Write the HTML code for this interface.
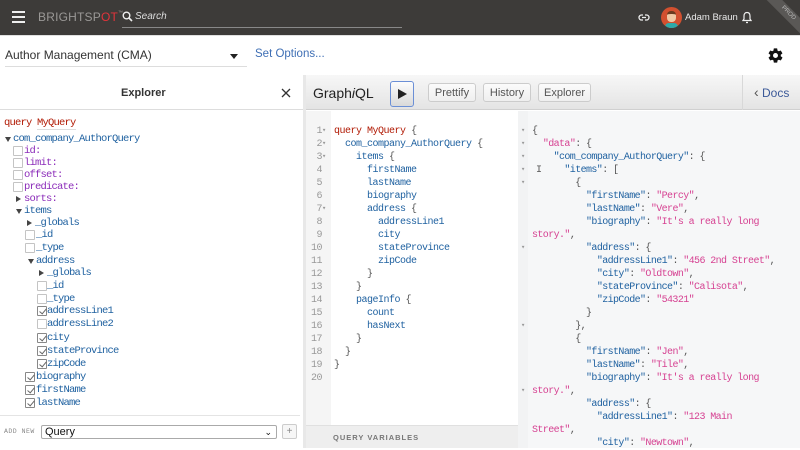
<!DOCTYPE html>
<html><head><meta charset="utf-8"><style>
*{margin:0;padding:0;box-sizing:border-box}
body{width:800px;height:448px;overflow:hidden;background:#fff;font-family:"Liberation Sans",sans-serif;position:relative}
.a{position:absolute;white-space:pre}
.mono{font-family:"Liberation Mono","DejaVu Sans Mono",monospace;font-size:10px}
.ex{letter-spacing:-0.8px;font-size:10.5px}
.ed{letter-spacing:-0.5px}
.hdr{position:absolute;left:0;top:0;width:800px;height:35px;background:#3d3b39;overflow:hidden}
.cb{position:absolute;width:10px;height:10px;border:1px solid #c4c4c4;background:#fff;border-radius:1px}
.cb.c{border-color:#888}
.cb.c:after{content:"";position:absolute;left:2.5px;top:0px;width:3px;height:6px;border:solid #666;border-width:0 1px 1px 0;transform:rotate(40deg)}
.tri{position:absolute;width:0;height:0}
.td{border-left:3px solid transparent;border-right:3px solid transparent;border-top:5px solid #444}
.tr{border-top:3px solid transparent;border-bottom:3px solid transparent;border-left:5px solid #444}
.btn{position:absolute;top:83px;height:19px;border:1px solid #ccc;border-radius:3px;background:linear-gradient(#fbfbfb,#efefef);font-size:11px;color:#555;text-align:center;line-height:18px}
.b{color:#1f61a0}.p{color:#8b2bb9}.k{color:#b11a04}.g{color:#555}.n{color:#999}
.jk{color:#1f61a0}.js{color:#d64292}
</style></head><body>
<div class="hdr">
 <div class="a" style="left:12px;top:11px;width:13px;height:2px;background:#eee;box-shadow:0 5px 0 #eee,0 10px 0 #eee"></div>
 <div class="a" style="left:38px;top:10px;font-size:12px;color:#9a9896;letter-spacing:0.2px">BRIGHTSP<span style="color:#e2333a">OT</span><span style="font-size:5px;vertical-align:top">™</span></div>
 <svg class="a" style="left:122px;top:11px" width="11" height="11" viewBox="0 0 11 11"><circle cx="4.5" cy="4.5" r="3.3" fill="none" stroke="#eee" stroke-width="1.4"/><path d="M7 7l3 3" stroke="#eee" stroke-width="1.6"/></svg>
 <div class="a" style="left:135px;top:11px;font-size:10px;color:#ddd;font-style:italic">Search</div>
 <div class="a" style="left:122px;top:27px;width:280px;height:1px;background:#888"></div>
 <svg class="a" style="left:638px;top:13px" width="12" height="9" viewBox="0 0 12 9"><path d="M5 2H3.5a2.5 2.5 0 0 0 0 5H5M7 2h1.5a2.5 2.5 0 0 1 0 5H7M4 4.5h4" fill="none" stroke="#eee" stroke-width="1.3"/></svg>
 <div class="a" style="left:661px;top:7px;width:21px;height:21px;border-radius:50%;background:#d2502f;overflow:hidden"><div style="position:absolute;left:6px;top:4px;width:9px;height:11px;border-radius:4px;background:#f1c9a5;border-top:3px solid #6b3b1f"></div><div style="position:absolute;left:4px;top:16px;width:13px;height:6px;background:#2ea9a8;border-radius:4px 4px 0 0"></div></div>
 <div class="a" style="left:685px;top:12px;font-size:9.5px;color:#e8e8e8">Adam Braun</div>
 <svg class="a" style="left:742px;top:11px" width="10" height="13" viewBox="0 0 10 13"><path d="M5 1.5c-2 0-3 1.5-3 3.5v3l-1 1.5h8l-1-1.5v-3c0-2-1-3.5-3-3.5z" fill="none" stroke="#eee" stroke-width="1.2"/><path d="M4 11.5h2" stroke="#eee" stroke-width="1.3"/></svg>
 <div class="a" style="left:752px;top:8px;width:72px;height:11px;background:#5a5856;transform:rotate(45deg);font-size:6px;color:#bbb;text-align:center;line-height:11px">PROD</div>
</div>
<div class="a" style="left:0;top:35px;width:800px;height:1px;background:#e0e0e0"></div>
<div class="a" style="left:5px;top:48px;font-size:12px;color:#333">Author Management (CMA)</div>
<div class="tri td a" style="left:230px;top:54px;border-top-color:#222;border-left-width:4px;border-right-width:4px"></div>
<div class="a" style="left:5px;top:66px;width:242px;height:1px;background:#ddd"></div>
<div class="a" style="left:255px;top:48px;font-size:11.5px;color:#3f6fb5">Set Options...</div>
<svg class="a" style="left:767px;top:47px" width="17" height="17" viewBox="0 0 24 24"><path fill="#111" d="M19.4 13c.04-.3.06-.65.06-1s-.02-.7-.06-1l2.1-1.65c.2-.15.24-.42.12-.64l-2-3.46c-.12-.22-.4-.3-.6-.22l-2.5 1c-.52-.4-1.08-.73-1.7-.98l-.37-2.65A.5.5 0 0 0 14 2h-4a.5.5 0 0 0-.5.42l-.37 2.65c-.62.25-1.18.58-1.7.98l-2.5-1c-.22-.08-.48 0-.6.22l-2 3.46c-.13.22-.07.49.12.64L4.57 11c-.04.32-.07.66-.07 1s.03.68.07 1l-2.1 1.65c-.2.15-.25.42-.12.64l2 3.46c.12.22.39.3.6.22l2.5-1c.52.4 1.08.73 1.7.98l.37 2.65c.04.24.25.42.5.42h4c.25 0 .46-.18.5-.42l.37-2.65c.62-.25 1.18-.58 1.7-.98l2.5 1c.22.08.48 0 .6-.22l2-3.46c.12-.22.07-.49-.12-.64L19.4 13zM12 15.5a3.5 3.5 0 1 1 0-7 3.5 3.5 0 0 1 0 7z"/></svg>

<!-- explorer -->
<div class="a" style="left:121px;top:87px;font-size:11px;font-weight:bold;color:#333">Explorer</div>
<svg class="a" style="left:281px;top:88px" width="10" height="10" viewBox="0 0 10 10"><path d="M1 1l8 8M9 1l-8 8" stroke="#333" stroke-width="1.3"/></svg>
<div class="a" style="left:0;top:109px;width:303px;height:1px;background:#ddd"></div>
<div class="a" style="left:303px;top:75px;width:3px;height:373px;background:#e8e8e8"></div>
<div class="mono ex">
<div class="a" style="left:4px;top:117px"><span class="k">query</span> <span class="k" style="border-bottom:1px solid #ddd">MyQuery</span></div>
<div class="tri td" style="position:absolute;left:5px;top:137px"></div><div class="a b" style="left:13px;top:133px">com_company_AuthorQuery</div>
<div class="cb" style="left:13px;top:146px"></div><div class="a p" style="left:24px;top:145px">id:</div>
<div class="cb" style="left:13px;top:158px"></div><div class="a p" style="left:24px;top:157px">limit:</div>
<div class="cb" style="left:13px;top:170px"></div><div class="a p" style="left:24px;top:169px">offset:</div>
<div class="cb" style="left:13px;top:182px"></div><div class="a p" style="left:24px;top:181px">predicate:</div>
<div class="tri tr" style="position:absolute;left:16px;top:196px"></div><div class="a p" style="left:24px;top:193px">sorts:</div>
<div class="tri td" style="position:absolute;left:16px;top:209px"></div><div class="a b" style="left:24px;top:205px">items</div>
<div class="tri tr" style="position:absolute;left:27px;top:220px"></div><div class="a b" style="left:35px;top:217px">_globals</div>
<div class="cb" style="left:25px;top:230px"></div><div class="a b" style="left:36px;top:229px">_id</div>
<div class="cb" style="left:25px;top:243px"></div><div class="a b" style="left:36px;top:242px">_type</div>
<div class="tri td" style="position:absolute;left:28px;top:259px"></div><div class="a b" style="left:36px;top:255px">address</div>
<div class="tri tr" style="position:absolute;left:39px;top:270px"></div><div class="a b" style="left:47px;top:267px">_globals</div>
<div class="cb" style="left:37px;top:281px"></div><div class="a b" style="left:47px;top:280px">_id</div>
<div class="cb" style="left:37px;top:294px"></div><div class="a b" style="left:47px;top:293px">_type</div>
<div class="cb c" style="left:37px;top:306px"></div><div class="a b" style="left:47px;top:305px">addressLine1</div>
<div class="cb" style="left:37px;top:319px"></div><div class="a b" style="left:47px;top:318px">addressLine2</div>
<div class="cb c" style="left:37px;top:333px"></div><div class="a b" style="left:47px;top:332px">city</div>
<div class="cb c" style="left:37px;top:346px"></div><div class="a b" style="left:47px;top:345px">stateProvince</div>
<div class="cb c" style="left:37px;top:359px"></div><div class="a b" style="left:47px;top:358px">zipCode</div>
<div class="cb c" style="left:25px;top:372px"></div><div class="a b" style="left:36px;top:371px">biography</div>
<div class="cb c" style="left:25px;top:385px"></div><div class="a b" style="left:36px;top:384px">firstName</div>
<div class="cb c" style="left:25px;top:398px"></div><div class="a b" style="left:36px;top:397px">lastName</div>
</div>
<div class="a" style="left:0;top:415px;width:300px;height:1px;background:#e4e4e4"></div>
<div class="a mono" style="left:4px;top:428px;font-size:6.5px;color:#888;letter-spacing:0.5px">ADD NEW</div>
<div class="a" style="left:41px;top:425px;width:236px;height:14px;border:1px solid #aaa;border-radius:2px;font-size:11px;line-height:12px;padding-left:3px;color:#111">Query<span style="position:absolute;right:4px;top:0;font-size:9px">⌄</span></div>
<div class="a" style="left:282px;top:424px;width:15px;height:15px;border:1px solid #ccc;border-radius:2px;font-size:10px;color:#888;text-align:center;line-height:13px;background:#f6f6f6">+</div>

<!-- toolbar -->
<div class="a" style="left:306px;top:75px;width:494px;height:35px;background:linear-gradient(#f7f7f7,#e4e4e4);border-bottom:1px solid #d0d0d0"></div>
<div class="a" style="left:313px;top:85px;font-size:14px;color:#222">Graph<i>i</i>QL</div>
<div class="a" style="left:390px;top:81px;width:24px;height:26px;border:1px solid #6b8fd6;border-radius:3px;background:linear-gradient(#fdfdfd,#d9d9d9)"><div class="tri tr" style="position:absolute;left:7px;top:7px;border-top-width:5px;border-bottom-width:5px;border-left-width:9px;border-left-color:#222"></div></div>
<div class="btn" style="left:428px;width:48px">Prettify</div>
<div class="btn" style="left:483px;width:48px">History</div>
<div class="btn" style="left:538px;width:53px">Explorer</div>
<div class="a" style="left:742px;top:75px;width:1px;height:35px;background:#d8d8d8"></div>
<div class="a" style="left:754px;top:84px;font-size:12px;color:#3b5998"><span style="font-size:14px;color:#555">‹</span> Docs</div>

<!-- editor -->
<div class="a" style="left:306px;top:111px;width:25px;height:337px;background:#f5f5f5"></div>
<div class="a" style="left:331px;top:111px;width:187px;height:314px;background:#fff"></div>
<div class="a" style="left:306px;top:425px;width:212px;height:23px;background:#eee;border-top:1px solid #e0e0e0"></div>
<div class="a" style="left:333px;top:433px;font-size:7.5px;color:#777;letter-spacing:1px;font-weight:bold">QUERY VARIABLES</div>
<div class="a" style="left:518px;top:111px;width:282px;height:337px;background:#f6f7f8"></div>
<div class="a" style="left:518px;top:111px;width:10px;height:337px;background:#f2f3f4"></div>

<div class="mono ed" style="line-height:13px">
<div class="a n" style="left:308px;top:125px;text-align:right;width:14px">1
2
3
4
5
6
7
8
9
10
11
12
13
14
15
16
17
18
19
20</div>
<div class="a n" style="left:322px;top:125px;font-size:7px">▾
▾
▾
 
 
 
▾</div>
<div class="a" style="left:334px;top:125px"><span class="k">query</span> <span class="k">MyQuery</span> <span class="g">{</span>
  <span class="b">com_company_AuthorQuery</span> <span class="g">{</span>
    <span class="b">items</span> <span class="g">{</span>
      <span class="b">firstName</span>
      <span class="b">lastName</span>
      <span class="b">biography</span>
      <span class="b">address</span> <span class="g">{</span>
        <span class="b">addressLine1</span>
        <span class="b">city</span>
        <span class="b">stateProvince</span>
        <span class="b">zipCode</span>
      <span class="g">}</span>
    <span class="g">}</span>
    <span class="b">pageInfo</span> <span class="g">{</span>
      <span class="b">count</span>
      <span class="b">hasNext</span>
    <span class="g">}</span>
  <span class="g">}</span>
<span class="g">}</span></div>
<div class="a n" style="left:521px;top:125px;font-size:7px">▾
▾
▾
▾
▾
 
 
 
 
▾
 
 
 
 
 
▾
 
 
 
 
▾</div>
<div class="a g" style="left:532px;top:125px;letter-spacing:-0.6px">{
  <span class="js">"data"</span>: {
    <span class="jk">"com_company_AuthorQuery"</span>: {
      <span class="jk">"items"</span>: [
        {
          <span class="jk">"firstName"</span>: <span class="js">"Percy"</span>,
          <span class="jk">"lastName"</span>: <span class="js">"Vere"</span>,
          <span class="jk">"biography"</span>: <span class="js">"It's a really long</span>
<span class="js">story."</span>,
          <span class="jk">"address"</span>: {
            <span class="jk">"addressLine1"</span>: <span class="js">"456 2nd Street"</span>,
            <span class="jk">"city"</span>: <span class="js">"Oldtown"</span>,
            <span class="jk">"stateProvince"</span>: <span class="js">"Calisota"</span>,
            <span class="jk">"zipCode"</span>: <span class="js">"54321"</span>
          }
        },
        {
          <span class="jk">"firstName"</span>: <span class="js">"Jen"</span>,
          <span class="jk">"lastName"</span>: <span class="js">"Tile"</span>,
          <span class="jk">"biography"</span>: <span class="js">"It's a really long</span>
<span class="js">story."</span>,
          <span class="jk">"address"</span>: {
            <span class="jk">"addressLine1"</span>: <span class="js">"123 Main</span>
<span class="js">Street"</span>,
            <span class="jk">"city"</span>: <span class="js">"Newtown"</span>,</div>
<div class="a g" style="left:536px;top:164px">I</div>
</div>
</body></html>
